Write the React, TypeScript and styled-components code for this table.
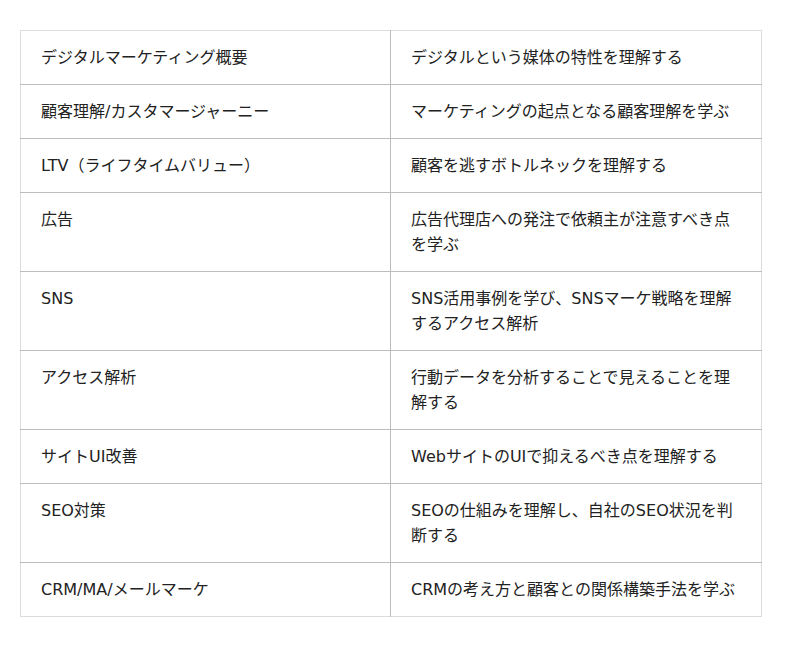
import React from 'react';
import styled, { createGlobalStyle } from 'styled-components';

const GlobalStyle = createGlobalStyle`
  body {
    margin: 0;
    background: #fff;
    font-family: "DejaVu Sans", "Noto Sans CJK JP", sans-serif;
    color: #222;
  }
`;

const Page = styled.div`
  padding: 30px 0 0 20px;
`;

const Table = styled.table`
  width: 742px;
  border-collapse: collapse;
  table-layout: fixed;
  border: 1px solid #dcdcdc;
`;

const Col = styled.col<{ $width?: number }>`
  width: ${(p) => (p.$width ? `${p.$width}px` : 'auto')};
`;

const Cell = styled.td`
  padding: 14px 20px;
  font-size: 16px;
  line-height: 25px;
  vertical-align: top;
  border-top: 1px solid #bdbdbd;
  & + & {
    border-left: 1px solid #bdbdbd;
  }
  tr:first-child > & {
    border-top: none;
  }
`;

const courses: [string, string][] = [
  ['デジタルマーケティング概要', 'デジタルという媒体の特性を理解する'],
  ['顧客理解/カスタマージャーニー', 'マーケティングの起点となる顧客理解を学ぶ'],
  ['LTV（ライフタイムバリュー）', '顧客を逃すボトルネックを理解する'],
  ['広告', '広告代理店への発注で依頼主が注意すべき点を学ぶ'],
  ['SNS', 'SNS活用事例を学び、SNSマーケ戦略を理解するアクセス解析'],
  ['アクセス解析', '行動データを分析することで見えることを理解する'],
  ['サイトUI改善', 'WebサイトのUIで抑えるべき点を理解する'],
  ['SEO対策', 'SEOの仕組みを理解し、自社のSEO状況を判断する'],
  ['CRM/MA/メールマーケ', 'CRMの考え方と顧客との関係構築手法を学ぶ'],
];

const App: React.FC = () => (
  <>
    <GlobalStyle />
    <Page>
      <Table>
        <colgroup>
          <Col $width={370} />
          <Col />
        </colgroup>
        <tbody>
          {courses.map(([title, desc]) => (
            <tr key={title}>
              <Cell>{title}</Cell>
              <Cell>{desc}</Cell>
            </tr>
          ))}
        </tbody>
      </Table>
    </Page>
  </>
);

export default App;
